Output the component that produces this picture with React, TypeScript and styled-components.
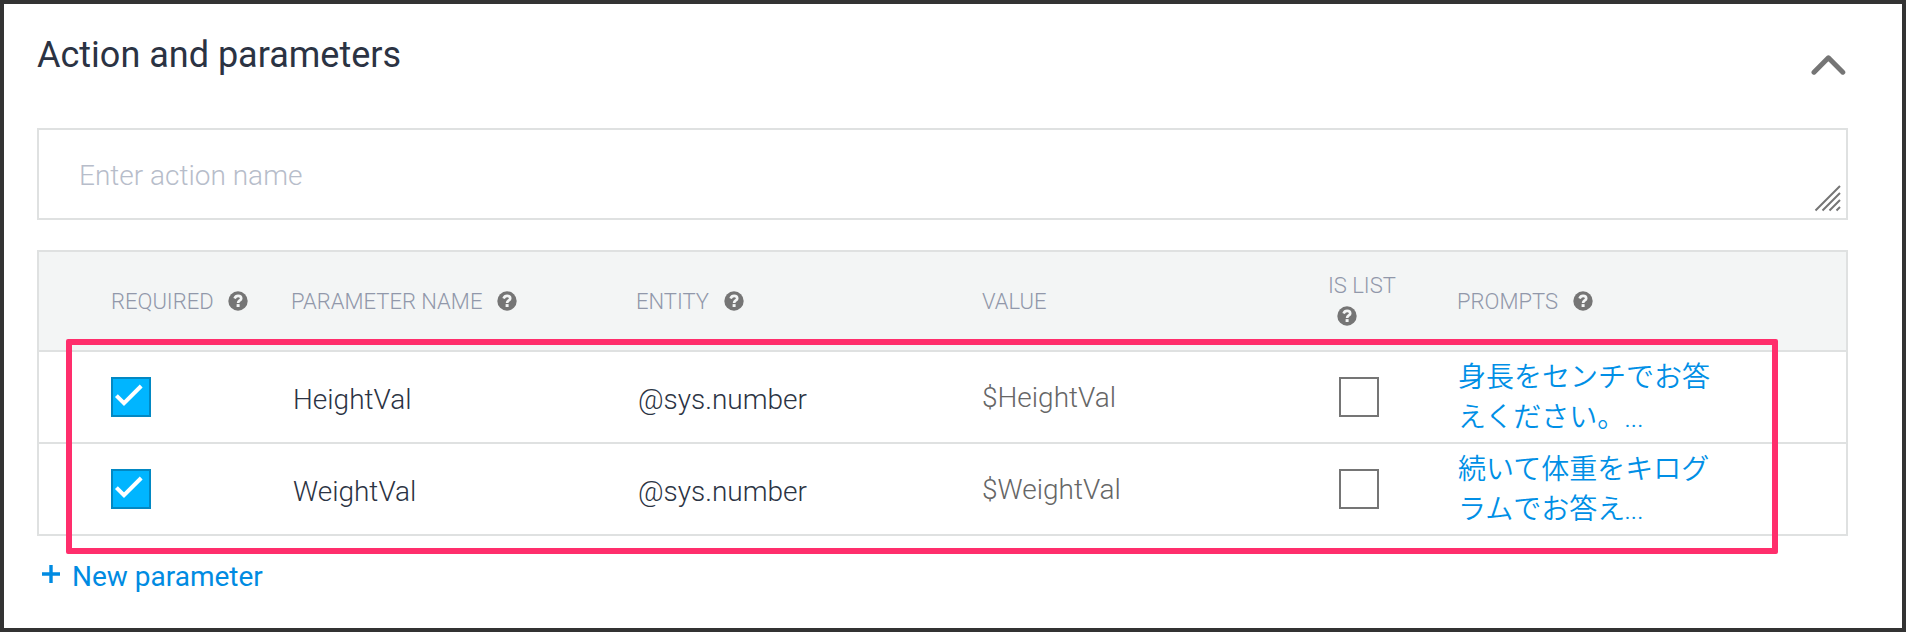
import React from "react";
import styled, { createGlobalStyle } from "styled-components";

const GlobalStyle = createGlobalStyle`
  * { box-sizing: border-box; }
  body {
    margin: 0;
    background: #fff;
    font-family: Roboto, "Noto Sans CJK JP", sans-serif;
  }
`;

const Frame = styled.main`
  position: relative;
  height: 632px;
  border: 4px solid #333;
  background: #fff;
  padding: 24px 54px 0 33px;
  display: flex;
  flex-direction: column;
`;

const Header = styled.header`
  display: flex;
  justify-content: space-between;
  height: 100px;
  padding-right: 2px;
`;

const Title = styled.h1`
  margin: 6px 0 0;
  font-size: 36px;
  line-height: 42px;
  font-weight: 400;
  color: #2b3343;
`;

const Chevron = styled.svg`
  width: 36px;
  height: 22px;
  margin-top: 26px;
`;

const ActionField = styled.div`
  display: flex;
  justify-content: space-between;
  height: 92px;
  border: 2px solid #dfe1e1;
  padding: 0 5px 0 40px;
`;

const Placeholder = styled.span`
  margin-top: 29px;
  font-size: 28px;
  line-height: 33px;
  font-weight: 300;
  color: #b7bdca;
`;

const Grip = styled.svg`
  width: 27px;
  height: 27px;
  align-self: flex-end;
  margin-bottom: 6px;
`;

const Table = styled.section`
  margin-top: 30px;
  border: 2px solid #dfe1e1;
`;

const Row = styled.div<{ $head?: boolean }>`
  display: grid;
  grid-template-columns: 180px 345px 346px 346px 129px 1fr;
  padding-left: 72px;
  height: ${(p) => (p.$head ? 100 : 92)}px;
  background: ${(p) => (p.$head ? "#f3f5f5" : "#fff")};
  border-bottom: 2px solid #dfe1e1;
  &:last-child {
    height: 90px;
    border-bottom: 0;
  }
`;

const HeadCell = styled.div<{ $stacked?: boolean }>`
  display: flex;
  flex-direction: ${(p) => (p.$stacked ? "column" : "row")};
  gap: ${(p) => (p.$stacked ? "7px" : "15px")};
  padding-top: ${(p) => (p.$stacked ? 21 : 37)}px;
  font-size: 22px;
  line-height: 26px;
  font-weight: 300;
  color: #9198aa;
  white-space: nowrap;
  &:first-child {
    gap: 14px;
  }
`;

const HelpSvg = styled.svg<{ $stacked?: boolean }>`
  width: 20px;
  height: 20px;
  flex: none;
  margin: ${(p) => (p.$stacked ? "0 0 0 9px" : "2px 0 0")};
`;

const Cell = styled.div<{ $left?: number; $top?: number; $muted?: boolean }>`
  padding: ${(p) => p.$top ?? 31}px 0 0 ${(p) => p.$left ?? 0}px;
  font-size: 28px;
  line-height: 33px;
  font-weight: 300;
  color: ${(p) => (p.$muted ? "#666" : "#2b3343")};
`;

const Box = styled.div<{ $checked?: boolean }>`
  width: 40px;
  height: 40px;
  border: 2px solid ${(p) => (p.$checked ? "#0288c3" : "#757575")};
  background: ${(p) => (p.$checked ? "#00b5ff" : "#fff")};
  svg {
    display: block;
    width: 36px;
    height: 36px;
  }
`;

const Prompt = styled.div`
  padding: 6px 0 0 1px;
  font-size: 28px;
  line-height: 40px;
  font-weight: 350;
  color: #008fe6;
  white-space: nowrap;
`;

const Ellipsis = styled.span`
  font-weight: 300;
  letter-spacing: -0.3px;
  margin-left: -1px;
`;

const AddLink = styled.div`
  display: flex;
  align-items: flex-start;
  margin: 24px 0 0 5px;
  font-size: 28px;
  line-height: 33px;
  color: #008be2;
  svg {
    width: 18px;
    height: 18px;
    margin: 5px 12px 0 0;
  }
`;

const Highlight = styled.div`
  position: absolute;
  left: 62px;
  top: 335px;
  width: 1712px;
  height: 215px;
  border: 6px solid #ff2e6c;
  border-radius: 2px;
`;

function Help({ stacked }: { stacked?: boolean }) {
  return (
    <HelpSvg $stacked={stacked} viewBox="0 0 20 20">
      <circle cx="10" cy="10" r="9.7" fill="#757575" />
      <path
        d="M6.6 7.5C7.3 5.6 8.6 4.9 10.1 4.9C12 4.9 13.2 6 13.2 7.4C13.2 9.5 10.1 9.4 10.1 11.9"
        fill="none"
        stroke="#f3f5f5"
        strokeWidth="2.7"
      />
      <rect x="8.6" y="13.1" width="3" height="2.9" fill="#f3f5f5" />
    </HelpSvg>
  );
}

const columns = [
  { label: "REQUIRED", help: true },
  { label: "PARAMETER NAME", help: true },
  { label: "ENTITY", help: true },
  { label: "VALUE", help: false },
  { label: "IS LIST", help: true, stacked: true },
  { label: "PROMPTS", help: true },
];

const parameters = [
  { name: "HeightVal", entity: "@sys.number", prompt: ["身長をセンチでお答", "えください。"] },
  { name: "WeightVal", entity: "@sys.number", prompt: ["続いて体重をキログ", "ラムでお答え"] },
];

export default function App() {
  return (
    <>
      <GlobalStyle />
      <Frame>
        <Header>
          <Title>Action and parameters</Title>
          <Chevron viewBox="0 0 36 22">
            <path
              d="M4 18.2L18.4 3.8L32.8 18.2"
              fill="none"
              stroke="#757575"
              strokeWidth="5"
              strokeLinecap="round"
              strokeLinejoin="round"
            />
          </Chevron>
        </Header>
        <ActionField>
          <Placeholder>Enter action name</Placeholder>
          <Grip viewBox="0 0 27 27">
            <path
              d="M1.5 25.5L26 1M8.5 25.5L26 8M15.5 25.5L26 15M22.5 25.5L26 22"
              fill="none"
              stroke="#757575"
              strokeWidth="2"
            />
          </Grip>
        </ActionField>
        <Table>
          <Row $head>
            {columns.map((c) => (
              <HeadCell key={c.label} $stacked={c.stacked}>
                {c.label}
                {c.help && <Help stacked={c.stacked} />}
              </HeadCell>
            ))}
          </Row>
          {parameters.map((p) => (
            <Row key={p.name}>
              <Cell $top={25}>
                <Box $checked>
                  <svg viewBox="0 0 36 36">
                    <path d="M3.4 16.6L11 24.2L28.2 7" fill="none" stroke="#fff" strokeWidth="4" />
                  </svg>
                </Box>
              </Cell>
              <Cell $left={2}>{p.name}</Cell>
              <Cell $left={2}>{p.entity}</Cell>
              <Cell $muted $top={29}>
                ${p.name}
              </Cell>
              <Cell $left={11} $top={25}>
                <Box />
              </Cell>
              <Prompt>
                <div>{p.prompt[0]}</div>
                <div>
                  {p.prompt[1]}
                  <Ellipsis>...</Ellipsis>
                </div>
              </Prompt>
            </Row>
          ))}
        </Table>
        <AddLink>
          <svg viewBox="0 0 18 18">
            <path d="M9 0V18M0 9H18" stroke="#008be2" strokeWidth="3.4" />
          </svg>
          New parameter
        </AddLink>
        <Highlight />
      </Frame>
    </>
  );
}
